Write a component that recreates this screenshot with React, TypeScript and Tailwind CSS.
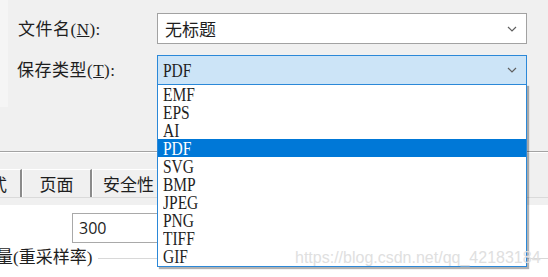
import React from "react";

const formats = ["EMF", "EPS", "AI", "PDF", "SVG", "BMP", "JPEG", "PNG", "TIFF", "GIF"];

function Chevron() {
  return (
    <svg width="10" height="6" viewBox="0 0 10 6" className="shrink-0">
      <polyline points="1,1 5,5 9,1" fill="none" stroke="#5f5f5f" strokeWidth="1.2" />
    </svg>
  );
}

export default function App() {
  return (
    <div className="relative w-[548px] h-[277px] overflow-hidden bg-[#f0f0f0] text-[#1e1e1e] font-['Liberation_Serif','Noto_Sans_CJK_SC',serif]">
      {/* save dialog fields */}
      <div className="flex h-[152px] border-b border-[#a3a3a3]">
        <div className="w-[8px] h-[107px] bg-[#f5f5f5]" />
        <div className="flex flex-col pt-[13px]">
          <div className="flex items-center">
            <label className="w-[149px] pl-[10px] pt-[2px] text-[17px] tracking-[0.5px]">
              文件名(<span className="underline">N</span>):
            </label>
            <div className="w-[370px] h-[31px] border border-[#a2a2a2] bg-white flex items-center justify-between pl-[7px] pr-[9px]">
              <span className="text-[17px] font-['Noto_Sans_CJK_SC',sans-serif]">无标题</span>
              <Chevron />
            </div>
          </div>
          <div className="flex items-center mt-[11px]">
            <label className="w-[149px] pl-[9px] pt-[2px] text-[17px] tracking-[0.5px]">
              保存类型(<span className="underline">T</span>):
            </label>
            <div className="w-[370px] h-[30px] border border-[#2b88d8] bg-[#cce4f7] flex items-center justify-between pl-[5px] pr-[9px]">
              <span className="text-[18px] pt-[2px] scale-x-[0.86] origin-left">PDF</span>
              <Chevron />
            </div>
          </div>
        </div>
      </div>

      {/* tabs */}
      <div className="flex items-end h-[45px] border-t border-white">
        <div className="w-[22px] h-[28px] flex justify-end items-center overflow-hidden pr-[13px] border-r-2 border-[#8a8a8a] border-t border-t-white">
          <span className="shrink-0 text-[17px] font-['Noto_Sans_CJK_SC',sans-serif]">格式</span>
        </div>
        <div className="w-[70px] h-[28px] flex justify-center items-center border-l border-white border-t border-t-white border-r-2 border-r-[#8a8a8a]">
          <span className="text-[17px] font-['Noto_Sans_CJK_SC',sans-serif]">页面</span>
        </div>
        <div className="w-[80px] h-[28px] flex items-center pl-[10px] border-l border-white border-t border-t-white border-r-2 border-r-[#8a8a8a]">
          <span className="text-[17px] font-['Noto_Sans_CJK_SC',sans-serif]">安全性</span>
        </div>
        <div className="flex-1 h-[28px]" />
      </div>
      <div className="h-[8px] border-t border-[#dadada] bg-[#f0f0f0]" />

      {/* page content */}
      <div className="bg-white h-[72px] pt-[8px]">
        <div className="ml-[72px] w-[160px] h-[30px] border border-[#a9a9a9] flex items-center pl-[6px]">
          <span className="text-[16px] font-['Open_Sans',sans-serif]">300</span>
        </div>
        <div className="flex items-center mt-[6px] ml-[-21px]">
          <span className="text-[17px] leading-[18px] shrink-0">质量(重采样率)</span>
          <div className="flex-1 h-px bg-[#d8d8d8] ml-[6px]" />
        </div>
      </div>

      {/* open dropdown list */}
      <div className="absolute left-[157px] top-[84px] w-[370px] h-[183px] border border-[#2b88d8] bg-white shadow-[2px_2px_1px_rgba(0,0,0,0.3)]">
        {formats.map((f) => (
          <div
            key={f}
            className={`h-[18px] flex items-center pl-[5px] ${f === "PDF" ? "bg-[#0078d7] text-white" : "text-[#1e1e1e]"}`}
          >
            <span className="text-[18px] leading-[18px] pt-[2px] scale-x-[0.86] origin-left">{f}</span>
          </div>
        ))}
      </div>

      {/* watermark */}
      <div className="absolute left-[295px] top-[249px] text-[16px] leading-[18px] text-[#e0e0e0] font-['Liberation_Sans',sans-serif] whitespace-nowrap">
        https://blog.csdn.net/qq_42183184
      </div>
    </div>
  );
}
